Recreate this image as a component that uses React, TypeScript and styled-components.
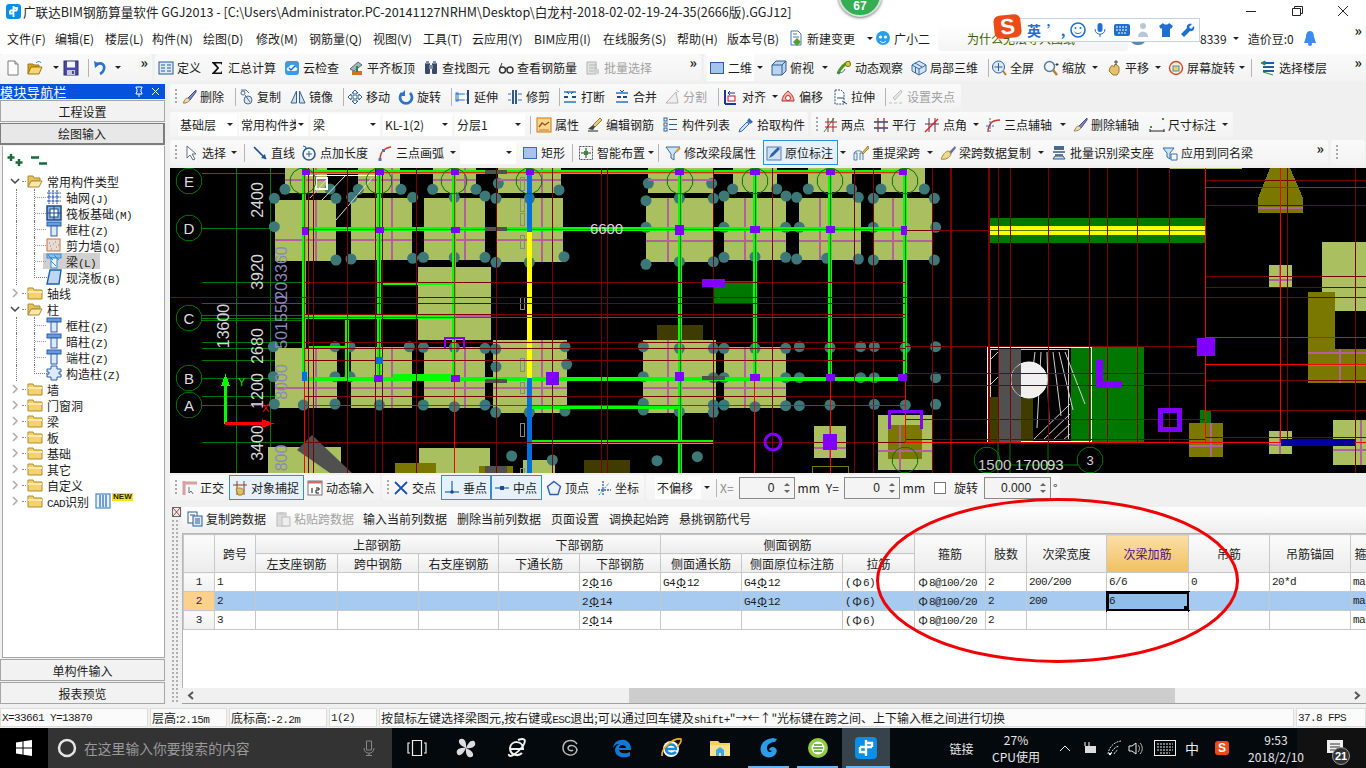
import React from "react";
import styled, { createGlobalStyle } from "styled-components";

const Global = createGlobalStyle`
  html, body { margin: 0; padding: 0; background: #f0f0f0; }
  * { box-sizing: border-box; }
  body { font-family: "Noto Sans CJK SC", "Liberation Sans", sans-serif; font-size: 12px; color: #1c1c1c; }
`;

const MONO = `"Liberation Mono", "Noto Sans CJK SC", monospace`;

/* ---------- icons ---------- */
const I: Record<string, React.ReactNode> = {
  new: <><path d="M3 1h7l3 3v11H3z" fill="#fff" stroke="#7a7a7a" /><path d="M10 1v3h3" fill="#ddd" stroke="#7a7a7a" /></>,
  open: <><path d="M1 4h5l1 1h5v2H4L1 14z" fill="#d9a520" stroke="#a07810" /><path d="M4 7h11l-3 7H1z" fill="#f6d66e" stroke="#a07810" /><path d="M9 3c2-2 4-2 5 0" stroke="#2a7fb0" fill="none" /></>,
  save: <><rect x="1" y="1" width="14" height="14" fill="#4a4aa8" stroke="#2c2c70" /><rect x="4" y="1.5" width="8" height="6" fill="#f4f4ff" /><rect x="4" y="10" width="8" height="5" fill="#c8c8d8" /><rect x="9" y="11" width="2" height="3" fill="#4a4aa8" /></>,
  undo: <><path d="M5 4c5-2 8 1 7 5-.5 2-2 4-4 5" fill="none" stroke="#2d74c8" strokeWidth="2.6" /><path d="M2 1l1 7 5-4z" fill="#2d74c8" /></>,
  define: <><rect x="1" y="2" width="14" height="12" fill="#dcebf8" stroke="#2a5a9a" /><path d="M3 5h4M3 8h4M3 11h4M9 5h4M9 8h4M9 11h4" stroke="#2a5a9a" /></>,
  sum: <path d="M3 2h10v3l-1.2-1.4H6.5L10.2 8l-4 4.4h5.8l1-2V14H3v-.8L8 8 3 2.8z" fill="#111" />,
  cloud: <><rect x="1" y="1" width="14" height="14" rx="3" fill="#3d9be6" /><path d="M5 11c-3 0-3-4 0-4 1-3 6-3 6 0 3 0 3 4 0 4z" fill="#e8f4ff" /><path d="M5 8l2 2 4-4" fill="none" stroke="#1f6fc0" strokeWidth="1.4" /></>,
  level: <><path d="M2 9l8-7 4 3-8 6z" fill="#9fb4c8" stroke="#5a6a7a" /><rect x="4" y="11" width="10" height="4" fill="#c8742c" /><path d="M9 6v6" stroke="#2c8a2c" strokeWidth="2" /></>,
  find: <><rect x="2" y="3" width="5" height="11" rx="1" fill="#3a4a66" /><rect x="9" y="3" width="5" height="11" rx="1" fill="#3a4a66" /><rect x="6" y="5" width="4" height="4" fill="#7e8ea8" /><rect x="3" y="1" width="3" height="3" fill="#7e8ea8" /><rect x="10" y="1" width="3" height="3" fill="#7e8ea8" /></>,
  glass: <><circle cx="4.5" cy="10" r="3" fill="none" stroke="#333" strokeWidth="1.4" /><circle cx="12" cy="10" r="3" fill="none" stroke="#333" strokeWidth="1.4" /><path d="M7 9c1-1 2-1 3 0M2 8l2-5" stroke="#333" fill="none" /></>,
  batch: <><rect x="2" y="2" width="9" height="12" fill="#e2e2e2" stroke="#b4b4b4" /><path d="M4 5h8M4 8h8M4 11h8" stroke="#b4b4b4" /><rect x="9" y="9" width="5" height="5" fill="#d0d0d0" /></>,
  twoD: <rect x="1.5" y="2.5" width="13" height="11" fill="#a4c4ee" stroke="#2c5ca8" />,
  top: <><path d="M1 5l4-4h10v10l-4 4H1z" fill="#b9d4ee" stroke="#2f5f8f" /><path d="M1 5h10v10M11 5l4-4" fill="none" stroke="#2f5f8f" /></>,
  orbit: <><path d="M2 14C4 8 9 3 14 2" stroke="#4a9a1c" strokeWidth="3" fill="none" /><circle cx="12" cy="4" r="2.6" fill="#d8c838" stroke="#7a7a1c" /><path d="M1 12c3 2 7 0 8-3" stroke="#3a6a9a" fill="none" /></>,
  part3d: <><path d="M8 1l7 4v6l-7 4-7-4V5z" fill="#d4e4f6" stroke="#3a6aa0" /><path d="M1 5l7 4 7-4M8 9v6M4 3l7 4M4.500 13V7" stroke="#3a6aa0" fill="none" /></>,
  fit: <><circle cx="7.500" cy="7" r="6" fill="#dceaf8" stroke="#2f5f9f" /><path d="M7.500 3v8M3.500 7h8" stroke="#2f5f9f" /><path d="M12 11l3 4" stroke="#b08030" strokeWidth="2" /></>,
  zoom: <><circle cx="6.500" cy="6.500" r="5" fill="#eef4fa" stroke="#5a7a9a" strokeWidth="1.5" /><path d="M10 10l4 5" stroke="#b08030" strokeWidth="2.4" /><path d="M14 3v3M12.500 4.500h3" stroke="#333" /></>,
  pan: <><path d="M4 8c1-3 3-3 4-1l1-3 2 1 2 2v5l-2 3H7L3 11z" fill="#e6c06c" stroke="#9a7a30" /><path d="M10 0v5M8 2h4" stroke="#444" /></>,
  rotate: <><circle cx="8" cy="8" r="6.500" fill="#e8f2e0" stroke="#d8482c" strokeWidth="1.4" /><rect x="5" y="6" width="6" height="5" fill="#f0d060" stroke="#4a8ac0" /></>,
  floor: <><path d="M3 3h11M3 7h11M3 11h11" stroke="#1f5fa0" strokeWidth="2" /><path d="M5 1L1 3l4 2zM3 12l10 3" stroke="#2a8a3a" fill="#2a8a3a" /></>,
  erase: <><path d="M15 1L7 9l2 2 6-8z" fill="#7a8ac8" stroke="#444a88" /><path d="M7 9c-3 0-3 2-5 5 3 0 6-1 7-3z" fill="#e8dcc0" stroke="#a08850" /><path d="M3 14h2" stroke="#d83" /></>,
  copy: <><path d="M3 1h5l3 3" fill="none" stroke="#4a6a8a" /><circle cx="10" cy="11" r="4" fill="#dde6ee" stroke="#4a6a8a" /><circle cx="5" cy="4" r="2" fill="none" stroke="#4a6a8a" /><path d="M7 6l5 7" stroke="#4a6a8a" /></>,
  mirror: <><path d="M6.500 2v12H1zM9.500 2v12H15z" fill="#cfe0f0" stroke="#38628c" /></>,
  move: <><path d="M8 1l3 3H9v3h3V5l3 3-3 3V9H9v3h2l-3 3-3-3h2V9H4v2L1 8l3-3v2h3V4H5z" fill="#fff" stroke="#2f5f8f" /></>,
  rot2: <><path d="M4 4a6 6 0 1 0 8 0" fill="none" stroke="#2d74c8" strokeWidth="2.800" /><path d="M7 1v6H1z" fill="#2d74c8" /></>,
  extend: <><path d="M13 1v14" stroke="#204a80" strokeWidth="2" /><path d="M1 5h8M1 11h8" stroke="#2d74c8" /><path d="M9 5h3M9 11h3" stroke="#888" strokeDasharray="1 1" /><rect x="1" y="4" width="2" height="8" fill="none" stroke="#2d74c8" /></>,
  trim: <><path d="M6 1v14M9 1v14" stroke="#204a80" strokeWidth="1.800" /><path d="M1 5h3M1 11h3M11 5h4M11 11h4" stroke="#2d74c8" /></>,
  brk: <><path d="M2 3h12M2 13h12" stroke="#2d74c8" strokeWidth="1.500" /><path d="M2 8h4M10 8h4" stroke="#204a80" strokeWidth="2" /><path d="M5 3l2 2M11 3l-2 2" stroke="#204a80" /></>,
  merge: <><path d="M2 4h12M2 13h12" stroke="#2d74c8" strokeWidth="1.500" /><path d="M3 8h4M9 8h4" stroke="#204a80" strokeWidth="2" /><path d="M6 1l2 2 2-2" stroke="#204a80" fill="none" /></>,
  split: <><path d="M2 14L12 3l2 11z" fill="#eee" stroke="#b4b4b4" /><path d="M12 1l3 2" stroke="#b4b4b4" /></>,
  align: <><path d="M2 1v14M2 15h11" stroke="#1a3a9a" strokeWidth="2" /><rect x="5" y="7" width="7" height="5" fill="#f8f8f8" stroke="#b02030" /><path d="M5 4h7M7 2L5 4l2 2" stroke="#1a3a9a" fill="none" /></>,
  offset: <><path d="M8 2c4 3 6 7 6 10H2c0-3 2-7 6-10z" fill="#f6b0a8" stroke="#b03030" /><circle cx="8" cy="9" r="2.500" fill="#fff" stroke="#b03030" /></>,
  stretch: <><path d="M3 1h6l3 3v11H3z" fill="#fff" stroke="#2f4f7f" strokeDasharray="2 1" /><path d="M5 9h7" stroke="#204a80" /><path d="M10 12l5 3" stroke="#204a80" /></>,
  grips: <><path d="M13 1L5 9l2 2 7-8z" fill="#e6e6e6" stroke="#c0c0c0" /><path d="M1 14h13" stroke="#c0c0c0" strokeDasharray="3 2" /></>,
  attr: <><rect x="1" y="1" width="14" height="14" fill="#f6d890" stroke="#c87818" /><path d="M3 10l3-4 3 2 4-3" stroke="#a05010" fill="none" strokeWidth="1.400" /><path d="M3 13h10" stroke="#c87818" /></>,
  bar: <><path d="M13 1L6 8l2 2 7-7z" fill="#e4d08c" stroke="#9a7a30" /><path d="M1 12l5-4 2 2-2 3z" fill="#444" /><path d="M1 14h10" stroke="#222" /></>,
  list: <><rect x="1" y="1" width="3" height="3" fill="#fff" stroke="#2f5f8f" /><rect x="1" y="6" width="3" height="3" fill="#fff" stroke="#2f5f8f" /><rect x="1" y="11" width="3" height="3" fill="#fff" stroke="#2f5f8f" /><path d="M6 2.500h8M6 7.500h8M6 12.500h8" stroke="#2f5f8f" /></>,
  pick: <><path d="M11 1l4 4-3 2-3-3z" fill="#2f6fb0" /><path d="M9 5l2 2-7 7-3 1 1-3z" fill="#cfe4f8" stroke="#2f6fb0" /></>,
  two: <><path d="M2 15L12 1" stroke="#30903c" /><path d="M3 5h12M3 10h12" stroke="#b02020" /><path d="M6 1v14M11 1v14" stroke="#803030" /></>,
  par: <><path d="M1 5h14M1 11h14" stroke="#204a80" strokeWidth="1.300" /><path d="M5 1v14M11 1v14" stroke="#804040" strokeWidth="1.300" /></>,
  ang: <><path d="M5 1v14M11 1v14M1 7h14" stroke="#5a3050" /><path d="M1 15L14 2" stroke="#e02020" strokeWidth="1.500" /></>,
  arc3: <><path d="M3 15C3 6 8 3 15 3" fill="none" stroke="#d03030" strokeWidth="1.400" /><path d="M1 9h8M5 1v14" stroke="#3a6a9a" strokeDasharray="2 1" /></>,
  del: <><path d="M15 1L7 9l2 2 6-8z" fill="#7a8ac8" stroke="#444a88" /><path d="M7 9c-3 0-3 2-5 5 3 0 6-1 7-3z" fill="#e8dcc0" stroke="#a08850" /></>,
  dim: <><rect x="1" y="9" width="2" height="2" fill="#2a9a3a" /><rect x="13" y="1" width="2" height="2" fill="#2a9a3a" /><path d="M1 12v3M15 12v3M1 14h14" stroke="#222" /></>,
  sel: <path d="M4 1v12l3-3 3 5 2-1-3-5h4z" fill="#fff" stroke="#607080" />,
  line: <><path d="M2 2l12 12" stroke="#1f4f8f" strokeWidth="1.600" /><path d="M14 14l-5-1 4-4z" fill="#1f4f8f" /></>,
  addlen: <><circle cx="8" cy="9" r="6" fill="none" stroke="#2f5f8f" strokeWidth="1.600" /><path d="M8 6v6M5 9h6" stroke="#2f5f8f" /><path d="M2 1l3 1-1 3" stroke="#2f5f8f" fill="none" /></>,
  arc: <><path d="M3 15C3 7 7 3 14 2" fill="none" stroke="#d04030" strokeWidth="1.400" /><rect x="1.500" y="13" width="3" height="3" fill="#4a7ab0" /><rect x="5" y="4" width="3" height="3" fill="#4a7ab0" /></>,
  rect: <rect x="1.500" y="2.500" width="13" height="11" fill="#a4c4ee" stroke="#3a6ab0" />,
  smart: <><rect x="1.500" y="1.500" width="13" height="13" fill="#f4f4f4" stroke="#555" strokeDasharray="2 1" /><path d="M8 3v10M3 8h10" stroke="#333" /><rect x="6" y="6" width="4" height="4" fill="#3a8a3a" /></>,
  modseg: <><path d="M1 2h14L9 9v6l-3-2V9z" fill="#d0e4f8" stroke="#3a6a9a" /><path d="M11 7l4-4" stroke="#d8a020" strokeWidth="2" /></>,
  mark: <><rect x="1" y="2" width="14" height="13" fill="#cfe0f2" stroke="#5a80ac" /><path d="M3 13l2-4 7-7 2 2-7 7z" fill="#2f5fa8" /></>,
  reext: <><path d="M1 15V8h3v7zM7 15V8h3v7M1 8c2-3 7-3 9 0" fill="#e8eef6" stroke="#5080b0" /><path d="M15 1l-6 7 1 1 6-6z" fill="#e4c060" stroke="#a08030" /></>,
  spancopy: <><path d="M15 1l-6 6 2 2 5-6z" fill="#6a70a0" /><path d="M9 6C5 6 3 10 1 14c4 1 9-1 10-5z" fill="#eed890" stroke="#a08830" /></>,
  batchid: <><rect x="3" y="1" width="10" height="4" fill="#4a6a8a" /><path d="M2 7h12M4 10h8" stroke="#3a5a7a" strokeWidth="1.500" /><path d="M2 14l2-3 8 0 2 3z" fill="#c8d8e8" stroke="#3a5a7a" /></>,
  apply: <><path d="M1 3h11l-4 5v6l-3-2V8z" fill="#cfe2f6" stroke="#2f6fb0" /><path d="M9 9h6v6H9z" fill="#fff" stroke="#2f6fb0" /></>,
  ortho: <><path d="M3 1v14M3 3h13" stroke="#d8a0a0" strokeWidth="3" /><path d="M8 7v6l2-2 2 3" stroke="#607080" fill="#fff" /></>,
  snap: <><path d="M5 1v14M12 1v14" stroke="#884020" /><path d="M1 5h14" stroke="#884020" /><path d="M4 9c3-2 7-1 8 2l-2 4H6z" fill="#e0c060" stroke="#a08030" /></>,
  dyn: <><rect x="1" y="1" width="14" height="14" fill="#fff" stroke="#777" /><rect x="1" y="1" width="14" height="2.500" fill="#c87070" /><path d="M5 8v5M9 8h3v2H9v3h3" stroke="#111" fill="none" /></>,
  cross: <path d="M2 2l12 12M14 2L2 14" stroke="#2050b0" strokeWidth="1.800" />,
  perp: <><path d="M8 1v11" stroke="#2f6fb0" strokeWidth="1.300" /><path d="M1 12h14" stroke="#2f6fb0" strokeWidth="1.300" /><circle cx="8" cy="12" r="1.800" fill="#204a90" /></>,
  mid: <><path d="M1 8h14" stroke="#2f6fb0" strokeWidth="1.300" /><rect x="6" y="6" width="4" height="4" fill="#204a90" /></>,
  vertex: <path d="M8 1.500l6.500 5-2.500 8H4l-2.500-8z" fill="#eaf2fc" stroke="#2f5fb0" strokeWidth="1.400" />,
  coord: <><path d="M7 1v14M2 10h13" stroke="#2f5fb0" strokeDasharray="2 1" strokeWidth="1.300" /><path d="M3 15L13 3" stroke="#2a9aa0" strokeDasharray="2 1" /></>,
  dcopy: <><rect x="1" y="1" width="9" height="11" fill="#fff" stroke="#2f5f8f" /><rect x="6" y="5" width="9" height="10" fill="#dceafa" stroke="#2f5f8f" /><path d="M8 8h5M8 10h5M8 12h5M3 4h5" stroke="#2f5f8f" /></>,
  paste: <><rect x="2" y="2" width="9" height="13" fill="#ddd" stroke="#bbb" /><rect x="7" y="6" width="8" height="9" fill="#eee" stroke="#bbb" /><rect x="4" y="1" width="5" height="3" fill="#ccc" /></>,
  chg: <><path d="M3 1h7l3 3v11H3z" fill="#fff" stroke="#3a7ac0" /><path d="M5 4h4M5 7h6" stroke="#3a7ac0" /><path d="M9 8l4 4-4 4-4-4z" fill="#58a028" /></>,
  xiao: <><circle cx="8" cy="8" r="7" fill="#28a0e8" /><circle cx="5.500" cy="7" r="1.600" fill="#fff" /><circle cx="10.500" cy="7" r="1.600" fill="#fff" /><path d="M5 11c2 2 4 2 6 0" stroke="#fff" fill="none" /></>,
  bell: <><path d="M8 1c3 0 4 3 4 6l2 6H2l2-6c0-3 1-6 4-6z" fill="#3a8af0" /><circle cx="8" cy="14" r="2" fill="#3a8af0" /></>,
  folder: <><path d="M1 3h5l1 2h8v9H1z" fill="#f5d36c" stroke="#a98a30" /><path d="M1 6h14v2H1z" fill="#fbe9a8" /></>,
  folderOpen: <><path d="M1 3h5l1 2h6v3H5l-4 6z" fill="#e8c358" stroke="#a98a30" /><path d="M4 8h11l-3 6H1z" fill="#fbe9a8" stroke="#a98a30" /></>,
  grid: <><path d="M3 1v14M7 1v14M11 1v14M1 4h14M1 8h14M1 12h14" stroke="#2f5fb0" strokeWidth="1.200" strokeDasharray="2 .5" /></>,
  raft: <><rect x="1" y="1" width="14" height="14" fill="#8ab0dc" stroke="#1a4a8a" strokeWidth="1.500" /><rect x="4" y="4" width="8" height="8" fill="#fff" stroke="#1a4a8a" /><path d="M8 1v14M1 8h14" stroke="#1a4a8a" /></>,
  col: <><rect x="1" y="1" width="14" height="4" fill="#6a9ade" stroke="#2c5ca8" /><rect x="5" y="5" width="6" height="10" fill="#dceafa" stroke="#2c5ca8" /></>,
  wall: <><rect x="1" y="2" width="13" height="12" fill="#e8dcd0" stroke="#c87040" /><path d="M4 9h1M7 7h1M10 10h1M5 12h1M9 5h1M3 6h1M12 8h1" stroke="#888" /></>,
  beam: <><rect x="1" y="1" width="14" height="4" fill="#8ac0ec" stroke="#3a8ad0" /><rect x="5" y="5" width="6" height="10" fill="#eaf4fc" stroke="#3a8ad0" /><path d="M2 2l5 5M8 2l5 5M5 8l5 5" stroke="#3a8ad0" /></>,
  slab: <path d="M4 1h11l-2 14H1z" fill="#bcd6f4" stroke="#1f5fb0" strokeWidth="1.400" />,
  gz: <><path d="M5 1h6v3h4v3h-2v2h2v3h-4v3H5v-3H1V9h2V7H1V4h4z" fill="#dceafa" stroke="#2c5ca8" /></>,
  cad: <><rect x="1" y="1" width="14" height="14" fill="#e8f2fc" stroke="#4a84c4" strokeWidth="1.200" /><path d="M5 2v12M11 2v12M8 2v12" stroke="#4a84c4" strokeWidth="1.500" /></>,
};

const Svg16 = styled.svg`
  width: 16px;
  height: 16px;
  flex: none;
  display: block;
`;
const Icon = ({ n }: { n: string }) => <Svg16 viewBox="0 0 16 16">{I[n]}</Svg16>;

/* ---------- page frame ---------- */
const Page = styled.div`
  position: relative;
  width: 1366px;
  height: 768px;
  overflow: hidden;
  display: flex;
  flex-direction: column;
  background: #f0f0f0;
`;

const TitleBar = styled.div`
  height: 22px;
  flex: none;
  background: #fff;
  display: flex;
  align-items: center;
  padding-left: 6px;
  font-size: 12.6px;
  color: #222;
  white-space: nowrap;
`;
const AppLogo = styled.svg`
  width: 15px;
  height: 15px;
  flex: none;
  margin-right: 2px;
`;
const WinBtn = styled.svg`
  width: 46px;
  height: 22px;
  flex: none;
`;
const WinBtns = styled.div`
  margin-left: auto;
  display: flex;
`;

const MenuBar = styled.div`
  height: 32px;
  flex: none;
  background: #fff;
  display: flex;
  align-items: center;
  padding-left: 7px;
  white-space: nowrap;
`;
const MenuItem = styled.div<{ $w: number }>`
  width: ${(p) => p.$w}px;
  flex: none;
`;
const MenuTool = styled.div<{ $w: number }>`
  display: flex;
  align-items: center;
  gap: 3px;
  width: ${(p) => p.$w}px;
  flex: none;
`;
const Notice = styled.div`
  width: 190px;
  height: 26px;
  flex: none;
  background: linear-gradient(#ffffff, #f4f4f4);
  border-radius: 3px;
  padding-left: 29px;
  color: #3a6000;
  line-height: 28px;
  overflow: hidden;
  margin-left: 1px;
`;
const UserText = styled.div<{ $ml: number }>`
  margin-left: ${(p) => p.$ml}px;
`;
const Avatar = styled.div`
  width: 16px;
  height: 14px;
  border-radius: 8px;
  background: #5a8ab0;
  margin-left: 2px;
`;

/* ---------- toolbars ---------- */
const ToolRow = styled.div<{ $h: number }>`
  height: ${(p) => p.$h}px;
  flex: none;
  display: flex;
  align-items: flex-start;
  gap: 3px;
`;
const Toolbar = styled.div<{ $w: number; $h?: number; $mt?: number; $ml?: number }>`
  width: ${(p) => p.$w}px;
  height: ${(p) => p.$h ?? 25}px;
  margin-top: ${(p) => p.$mt ?? 0}px;
  margin-left: ${(p) => p.$ml ?? 0}px;
  flex: none;
  display: flex;
  align-items: center;
  border-radius: 3px;
  background: linear-gradient(#fafafa, #f3f3f3);
  white-space: nowrap;
`;
const Grip = styled.div<{ $w: number }>`
  width: ${(p) => p.$w}px;
  height: 16px;
  flex: none;
  margin-left: 0;
  padding-left: 5px;
  &::before {
    content: "";
    display: block;
    width: 2px;
    height: 16px;
    background: repeating-linear-gradient(to bottom, #a8a8a8 0 2px, transparent 2px 4px);
  }
`;
const ToolBtn = styled.div<{ $w: number; $off?: boolean; $on?: boolean; $white?: boolean }>`
  width: ${(p) => p.$w}px;
  height: ${(p) => (p.$on || p.$white ? "100%" : "auto")};
  flex: none;
  display: flex;
  align-items: center;
  gap: 3px;
  padding-left: ${(p) => (p.$on ? 2 : p.$white ? 2 : 0)}px;
  color: ${(p) => (p.$off ? "#a2a2a2" : "#1c1c1c")};
  background: ${(p) => (p.$on ? "#e6f1fb" : p.$white ? "#fff" : "transparent")};
  border: ${(p) => (p.$on ? "1px solid #2f8ee0" : "none")};
  overflow: hidden;
`;
const Sep = styled.div<{ $w: number }>`
  width: ${(p) => p.$w}px;
  height: 18px;
  flex: none;
  display: flex;
  justify-content: center;
  &::before {
    content: "";
    width: 1px;
    height: 18px;
    background: #b4b4b4;
  }
`;
const Space = styled.div<{ $w: number }>`
  width: ${(p) => p.$w}px;
  flex: none;
`;
const ArrowBox = styled.div<{ $w: number }>`
  width: ${(p) => p.$w}px;
  flex: none;
  display: flex;
  justify-content: center;
  &::before {
    content: "";
    border-left: 3px solid transparent;
    border-right: 3px solid transparent;
    border-top: 3px solid #222;
  }
`;
const More = styled.div`
  margin-left: auto;
  padding-right: 4px;
  font-size: 14px;
  font-weight: 700;
  line-height: 12px;
  align-self: flex-start;
  padding-top: 2px;
`;
const Combo = styled.div<{ $w: number; $ml?: number; $plain?: boolean }>`
  width: ${(p) => p.$w}px;
  height: 22px;
  margin-left: ${(p) => p.$ml ?? 0}px;
  flex: none;
  background: #fff;
  display: flex;
  align-items: center;
  padding-left: 2px;
  overflow: hidden;
  justify-content: space-between;
  &::after {
    content: "";
    display: ${(p) => (p.$plain ? "none" : "block")};
    flex: none;
    margin: 0 4px 0 2px;
    border-left: 3px solid transparent;
    border-right: 3px solid transparent;
    border-top: 3px solid #222;
  }
`;
const ComboText = styled.span`
  overflow: hidden;
  white-space: nowrap;
  flex: 1;
`;

type Item =
  | { k: "t"; i: string; l: string; w: number; off?: boolean; on?: boolean; white?: boolean }
  | { k: "s"; w: number }
  | { k: "g"; w: number }
  | { k: "a"; w: number }
  | { k: "p"; w: number };
const t = (i: string, l: string, w: number, o: { off?: boolean; on?: boolean; white?: boolean } = {}): Item => ({ k: "t", i, l, w, ...o });
const s = (w: number): Item => ({ k: "s", w });
const g = (w: number): Item => ({ k: "g", w });
const a = (w: number): Item => ({ k: "a", w });
const p = (w: number): Item => ({ k: "p", w });

const Items = ({ list }: { list: Item[] }) => (
  <>
    {list.map((it, n) => {
      if (it.k === "t")
        return (
          <ToolBtn key={n} $w={it.w} $off={it.off} $on={it.on} $white={it.white}>
            <Icon n={it.i} />
            {it.l && <span>{it.l}</span>}
          </ToolBtn>
        );
      if (it.k === "s") return <Sep key={n} $w={it.w} />;
      if (it.k === "g") return <Space key={n} $w={it.w} />;
      if (it.k === "a") return <ArrowBox key={n} $w={it.w} />;
      return <Grip key={n} $w={it.w} />;
    })}
  </>
);

const R1A: Item[] = [g(5), t("new", "", 22), t("open", "", 22), a(14), t("save", "", 22), s(7), t("undo", "", 23), a(5)];
const R1B: Item[] = [g(3), t("define", "定义", 51), t("sum", "汇总计算", 75), t("cloud", "云检查", 64), t("level", "平齐板顶", 75), t("find", "查找图元", 75), t("glass", "查看钢筋量", 87), t("batch", "批量选择", 80, { off: true })];
const R1C: Item[] = [g(3), t("twoD", "二维", 47, { white: true }), a(12), g(5), t("top", "俯视", 47), a(14), g(4), t("orbit", "动态观察", 75), t("part3d", "局部三维", 74), s(6), t("fit", "全屏", 52), t("zoom", "缩放", 47), a(10), g(6), t("pan", "平移", 46), a(12), g(4), t("rotate", "屏幕旋转", 70), a(8), s(10), g(4), t("floor", "选择楼层", 70)];
const R2: Item[] = [p(11), t("erase", "删除", 51), s(6), t("copy", "复制", 52), t("mirror", "镜像", 50), s(7), t("move", "移动", 51), t("rot2", "旋转", 49), s(8), t("extend", "延伸", 52), t("trim", "修剪", 49), s(6), t("brk", "打断", 52), t("merge", "合并", 50), t("split", "分割", 50, { off: true }), s(9), t("align", "对齐", 47), a(10), t("offset", "偏移", 52), t("stretch", "拉伸", 50), s(6), t("grips", "设置夹点", 73, { off: true })];
const R3A: Item[] = [s(11), t("attr", "属性", 51), t("bar", "编辑钢筋", 76), t("list", "构件列表", 75), t("pick", "拾取构件", 70)];
const R3B: Item[] = [p(11), t("two", "两点", 51), t("par", "平行", 51), t("ang", "点角", 47), a(10), g(4), t("arc3", "三点辅轴", 73), a(10), g(4), t("del", "删除辅轴", 77), t("dim", "尺寸标注", 71), a(10)];
const R4A: Item[] = [p(13), t("sel", "选择", 44), a(14), s(6), g(5), t("line", "直线", 49), t("addlen", "点加长度", 76), t("arc", "三点画弧", 70), a(12)];
const R4B: Item[] = [g(6), t("rect", "矩形", 47), s(6), g(3), t("smart", "智能布置", 70), a(6), s(8), g(3), t("modseg", "修改梁段属性", 98), t("mark", "原位标注", 75, { on: true }), a(10), g(5), t("reext", "重提梁跨", 72), a(10), g(5), t("spancopy", "梁跨数据复制", 96), a(10), g(5), t("batchid", "批量识别梁支座", 111), t("apply", "应用到同名梁", 95)];
const S1: Item[] = [p(11), t("ortho", "正交", 48), t("snap", "对象捕捉", 75, { on: true }), g(3), t("dyn", "动态输入", 70)];
const S2: Item[] = [p(11), t("cross", "交点", 48), t("perp", "垂点", 50, { on: true }), t("mid", "中点", 51, { on: true }), g(4), t("vertex", "顶点", 50), t("coord", "坐标", 48)];

/* ---------- body ---------- */
const Body = styled.div`
  flex: 1;
  min-height: 0;
  display: flex;
`;
const Nav = styled.div`
  width: 165px;
  flex: none;
  display: flex;
  flex-direction: column;
  padding-bottom: 3px;
`;
const NavHead = styled.div`
  height: 15px;
  flex: none;
  background: #0553dd;
  color: #fff;
  display: flex;
  align-items: center;
  font-size: 13px;
  margin-bottom: 1px;
  letter-spacing: 0.4px;
`;
const NavHeadIcons = styled.svg`
  width: 34px;
  height: 15px;
  margin-left: auto;
`;
const NavBtn = styled.div<{ $down?: boolean }>`
  height: 22px;
  flex: none;
  display: flex;
  align-items: center;
  justify-content: center;
  background: ${(q) => (q.$down ? "#e8e8e8" : "#f2f2f2")};
  border: 1px solid ${(q) => (q.$down ? "#7e7e7e" : "#a6a6a6")};
  border-width: ${(q) => (q.$down ? "1px 2px 2px 1px" : "1px")};
  margin-bottom: 1px;
`;
const TreeWrap = styled.div`
  flex: 1;
  min-height: 0;
  background: #fff;
  border: 1px solid #a6a6a6;
  border-top: none;
  margin: 0 0 1px 2px;
`;
const TreeTools = styled.div`
  height: 27px;
  display: flex;
  align-items: center;
  gap: 6px;
  padding-left: 4px;
`;
const PlusMinus = styled.svg`
  width: 18px;
  height: 14px;
`;
const TreeRow = styled.div<{ $child?: boolean; $last?: boolean }>`
  position: relative;
  height: 16px;
  display: flex;
  align-items: center;
  padding-left: ${(q) => (q.$child ? 40 : 6)}px;
  white-space: nowrap;
  &::before {
    content: "";
    display: ${(q) => (q.$child ? "block" : "none")};
    position: absolute;
    left: 31px;
    top: 0;
    width: 12px;
    height: ${(q) => (q.$last ? 8 : 16)}px;
    border-left: 1px dotted #777;
    border-bottom: ${(q) => (q.$last ? "1px dotted #777" : "none")};
    background: ${(q) =>
      q.$last ? "none" : "linear-gradient(to right,#999 0 50%,transparent 50%) 0 8px/2px 1px repeat-x"};
  }
  &::after {
    content: "";
    display: ${(q) => (q.$child ? "block" : "none")};
    position: absolute;
    left: 13px;
    top: 0;
    height: 16px;
    border-left: 1px dotted #777;
  }
`;
const Chevron = styled.svg`
  width: 12px;
  height: 12px;
  flex: none;
`;
const DotLink = styled.div`
  width: 4px;
  flex: none;
  margin: 0 1px;
  border-top: 1px dotted #888;
`;
const TreeLabel = styled.div`
  margin-left: 4px;
  display: flex;
  align-items: center;
  height: 16px;
`;
const SelBox = styled.div`
  display: flex;
  align-items: center;
  width: 57px;
  background: #d0d0d0;
  gap: 4px;
  height: 16px;
  padding-left: 3px;
`;
const Latin = styled.span`
  font-family: ${MONO};
  font-size: 11px;
  letter-spacing: -0.6px;
`;
const NewTag = styled.span`
  font-family: "Liberation Sans", sans-serif;
  font-size: 8px;
  font-weight: 700;
  color: #222;
  background: #ffe600;
  line-height: 8px;
  padding: 0 1px;
  margin: -8px 0 0 1px;
`;

const Main = styled.div`
  flex: 1;
  min-width: 0;
  margin-left: 5px;
  display: flex;
  flex-direction: column;
`;
const Canvas = styled.svg`
  display: block;
  width: 1196px;
  height: 305px;
  flex: none;
  background: #000;
  shape-rendering: crispEdges;
`;

const BottomPanel = styled.div`
  flex: 1;
  min-height: 0;
  display: flex;
`;
const PanelGrip = styled.div`
  width: 12px;
  flex: none;
  position: relative;
  padding-top: 13px;
  &::after {
    content: "";
    display: block;
    margin-left: 2px;
    width: 6px;
    height: 184px;
    background-image: repeating-linear-gradient(to bottom, #b0b0b0 0 2px, transparent 2px 4px),
      repeating-linear-gradient(to bottom, #b0b0b0 0 2px, transparent 2px 4px);
    background-size: 2px 100%, 2px 100%;
    background-position: 0 0, 4px 0;
    background-repeat: no-repeat;
  }
`;
const CloseMark = styled.svg`
  position: absolute;
  left: 2px;
  top: 0;
  width: 9px;
  height: 10px;
`;
const PanelMain = styled.div`
  flex: 1;
  min-width: 0;
  display: flex;
  flex-direction: column;
  padding-bottom: 4px;
`;
const TableTools = styled.div`
  height: 23px;
  flex: none;
  margin-bottom: 3px;
  background: linear-gradient(#ffffff, #f0f0f0);
  display: flex;
  align-items: center;
  padding-left: 5px;
  white-space: nowrap;
`;
const TableArea = styled.div`
  flex: 1;
  min-height: 0;
  background: #fff;
  overflow: hidden;
  border-top: 1px solid #b4b4b4;
  border-left: 1px solid #b4b4b4;
`;
const Table = styled.table`
  border-collapse: collapse;
  table-layout: fixed;
  width: 1183px;
  margin: 0;
`;
const Th = styled.th<{ $hot?: boolean }>`
  height: 19px;
  padding: 0;
  font-weight: 400;
  font-size: 12px;
  overflow: hidden;
  white-space: nowrap;
  color: ${(q) => (q.$hot ? "#4b0a86" : "#1c1c1c")};
  border: 1px solid #c8c8c8;
  background: ${(q) =>
    q.$hot ? "linear-gradient(#fbdfa8,#f0c060)" : "linear-gradient(#fbfbfb,#ececec)"};
`;
const Td = styled.td<{ $sel?: boolean; $active?: boolean; $thick?: boolean }>`
  height: 19px;
  padding: 0 0 0 2px;
  border: 1px solid #c8c8c8;
  font-family: ${MONO};
  font-size: 11px;
  letter-spacing: -0.6px;
  white-space: nowrap;
  overflow: hidden;
  position: relative;
  background: ${(q) => (q.$active ? "#8fbdec" : q.$sel ? "#a6caf0" : "#fff")};
  border-left: ${(q) => (q.$thick ? "1.500px solid #000" : "1px solid #c8c8c8")};
  outline: ${(q) => (q.$active ? "3px solid #000" : "none")};
  outline-offset: -2px;
`;
const RowHead = styled.td<{ $sel?: boolean }>`
  height: 19px;
  padding: 0;
  text-align: center;
  border: 1px solid #c8c8c8;
  font-family: ${MONO};
  font-size: 11px;
  color: ${(q) => (q.$sel ? "#4b0a86" : "#222")};
  background: ${(q) => (q.$sel ? "#fcd28a" : "linear-gradient(#fbfbfb,#f0f0f0)")};
`;
const Handle = styled.span`
  position: absolute;
  right: -1px;
  bottom: -1px;
  width: 5px;
  height: 5px;
  background: #000;
`;
const Rebar = styled.span`
  font-family: "Noto Sans CJK SC", sans-serif;
  font-size: 12px;
  letter-spacing: 0;
  display: inline-block;
  width: 12px;
  text-align: center;
  line-height: 12px;
  vertical-align: -1px;
`;
const RebarIII = styled(Rebar)`
  text-decoration: underline;
  text-underline-offset: 0;
`;

const HBar = styled.div`
  height: 16px;
  flex: none;
  background: #f0f0f0;
  display: flex;
  align-items: center;
  border-bottom: 1px solid #a0a0a0;
`;
const HArrow = styled.svg`
  width: 17px;
  height: 15px;
  flex: none;
`;
const HTrackGap = styled.div<{ $w: number }>`
  width: ${(q) => q.$w}px;
  flex: none;
`;
const HThumb = styled.div`
  width: 546px;
  height: 15px;
  flex: none;
  background: #cdcdcd;
`;

const StatusBar = styled.div`
  height: 20px;
  flex: none;
  display: flex;
  gap: 2px;
  background: #f0f0f0;
  padding-bottom: 1px;
`;
const StatusCell = styled.div<{ $w: number }>`
  width: ${(q) => q.$w}px;
  flex: none;
  background: #fbfbfb;
  border: 1px solid #dcdcdc;
  display: flex;
  align-items: center;
  padding-left: 1px;
  white-space: nowrap;
  overflow: hidden;
`;

/* ---------- spin / snap row ---------- */
const SnapText = styled.span<{ $ml?: number; $off?: boolean }>`
  margin-left: ${(q) => q.$ml ?? 0}px;
  color: ${(q) => (q.$off ? "#8a8a8a" : "#1c1c1c")};
  flex: none;
`;
const Spin = styled.div<{ $w: number; $ml: number }>`
  width: ${(q) => q.$w}px;
  margin-left: ${(q) => q.$ml}px;
  height: 22px;
  flex: none;
  background: #f4f4f4;
  border: 1px solid #8a8a8a;
  display: flex;
  align-items: center;
  justify-content: flex-end;
  font-family: "Liberation Sans", sans-serif;
  font-size: 12px;
`;
const SpinArrows = styled.div`
  width: 14px;
  height: 100%;
  margin-left: 5px;
  display: flex;
  flex-direction: column;
  justify-content: center;
  align-items: center;
  gap: 4px;
`;
const TriUp = styled.i`
  display: block;
  border-left: 3px solid transparent;
  border-right: 3px solid transparent;
  border-bottom: 3px solid #666;
`;
const TriDown = styled.i`
  display: block;
  border-left: 3px solid transparent;
  border-right: 3px solid transparent;
  border-top: 3px solid #666;
`;
const Check = styled.div`
  width: 12px;
  height: 12px;
  margin-left: 9px;
  background: #fff;
  border: 1px solid #777;
  flex: none;
`;

/* ---------- taskbar ---------- */
const Taskbar = styled.div`
  height: 40px;
  flex: none;
  display: flex;
  align-items: stretch;
  background: linear-gradient(to right, #03090d 0, #03090d 1297px, #111 1297px);
  color: #e8e8e8;
`;
const StartBtn = styled.div`
  width: 48px;
  flex: none;
  background: #000;
  display: flex;
  align-items: center;
  justify-content: center;
`;
const SearchBox = styled.div`
  width: 344px;
  flex: none;
  background: #333;
  display: flex;
  align-items: center;
  padding-left: 9px;
  color: #9a9a9a;
  font-size: 13.800px;
`;
const TaskCell = styled.div<{ $w: number; $bar?: boolean; $active?: boolean }>`
  width: ${(q) => q.$w}px;
  flex: none;
  position: relative;
  display: flex;
  align-items: center;
  justify-content: center;
  background: ${(q) => (q.$active ? "#37434a" : "transparent")};
  &::after {
    content: "";
    display: ${(q) => (q.$bar ? "block" : "none")};
    position: absolute;
    left: 4px;
    right: ${(q) => (q.$active ? 0 : 4)}px;
    bottom: 0;
    height: 2px;
    background: #6cb4f0;
  }
`;
const TaskSvg = styled.svg<{ $s?: number }>`
  width: ${(q) => q.$s ?? 24}px;
  height: ${(q) => q.$s ?? 24}px;
  display: block;
  flex: none;
`;
const TrayItem = styled.div<{ $ml: number; $w: number }>`
  margin-left: ${(q) => q.$ml}px;
  width: ${(q) => q.$w}px;
  flex: none;
  display: flex;
  align-items: center;
  justify-content: center;
  white-space: nowrap;
  position: relative;
`;
const TrayChar = styled.span`
  font-size: 14px;
`;
const CpuBox = styled.div`
  display: flex;
  flex-direction: column;
  align-items: center;
  justify-content: center;
  line-height: 17px;
  font-size: 12px;
`;
const NotifyBadge = styled.div`
  position: absolute;
  left: 7px;
  top: 19px;
  width: 18px;
  height: 18px;
  border-radius: 50%;
  background: #333;
  border: 1px solid #999;
  color: #fff;
  font-family: "Liberation Sans", sans-serif;
  font-size: 11px;
  font-weight: 700;
  display: flex;
  align-items: center;
  justify-content: center;
`;

/* ---------- overlays ---------- */
const Badge = styled.div`
  position: absolute;
  left: 838px;
  top: -27px;
  width: 44px;
  height: 44px;
  border-radius: 50%;
  background: #36ad53;
  border: 2px solid #d8e4da;
  box-shadow: 0 1px 3px #777;
  color: #fff;
  font-family: "Liberation Sans", sans-serif;
  font-weight: 700;
  font-size: 12px;
  display: flex;
  align-items: flex-end;
  justify-content: center;
  padding-bottom: 2px;
`;
const SogouBar = styled.div`
  position: absolute;
  left: 1009px;
  top: 18px;
  width: 191px;
  height: 24px;
  background: #fff;
  border: 1px solid #c4d4e4;
  display: flex;
  align-items: center;
  padding-left: 13px;
`;
const SogouCell = styled.div`
  width: 22px;
  flex: none;
  display: flex;
  align-items: center;
  justify-content: center;
`;
const SogouLogo = styled.div`
  position: absolute;
  left: 994px;
  top: 15px;
  width: 27px;
  height: 23px;
  background: #ee4a17;
  border-radius: 6px;
  transform: rotate(-6deg);
  color: #fff;
  font-family: "Liberation Sans", sans-serif;
  font-weight: 700;
  font-size: 22px;
  line-height: 23px;
  text-align: center;
`;
const SogouWord = styled.span`
  color: #1f6fd0;
  font-weight: 700;
  font-size: 14px;
`;
const TrayS = styled.div`
  width: 14px;
  height: 14px;
  background: #ee4a17;
  border-radius: 3px;
  color: #fff;
  font-family: "Liberation Sans", sans-serif;
  font-weight: 700;
  font-size: 12px;
  line-height: 14px;
  text-align: center;
`;
const RedEllipse = styled.svg`
  position: absolute;
  left: 875px;
  top: 497px;
  width: 365px;
  height: 167px;
  pointer-events: none;
`;

/* ---------- canvas data ---------- */
const z4 = (x: number, y: number): [number, number] => [170 + x / 3, 165 + y / 3];
const z5 = (x: number, y: number): [number, number] => [570 + x / 3, 165 + y / 3];
const teal: [number, number][] = [
  ...([[345,73],[313,100],[480,72],[498,100],[545,97],[565,73],[693,73],[728,97],[788,73],[853,97],[918,73],[945,93],[978,100],[985,55],[1167,75],[1078,100],[313,185],[498,285],[543,282],[728,280],[760,277],[853,277],[945,277],[978,292],[1078,292],[1182,275],[310,545],[495,545],[540,545],[718,545],[760,547],[853,547],[945,550],[977,552],[1185,545],[310,635],[495,635],[540,635],[978,605],[1190,598],[313,717],[400,720],[495,717],[628,720],[760,720],[853,725],[945,720],[977,742],[1078,742],[1185,738],[1025,873],[1147,885]] as [number,number][]).map(([x, y]) => z4(x, y)),
  ...([[235,55],[425,55],[228,107],[328,100],[430,100],[488,72],[462,93],[620,72],[648,93],[680,97],[715,72],[845,72],[865,97],[910,100],[933,72],[1063,72],[1093,100],[228,298],[328,290],[430,290],[462,277],[555,275],[647,277],[680,282],[770,280],[865,282],[910,285],[1093,285],[220,545],[328,550],[430,550],[462,550],[555,550],[647,550],[688,545],[780,548],[872,545],[913,545],[1006,548],[1097,545],[220,635],[430,638],[462,638],[647,638],[688,638],[872,638],[913,638],[1097,638],[220,715],[220,735],[328,740],[430,720],[430,742],[462,720],[555,725],[647,722],[688,722],[780,720],[913,718],[1006,720],[1097,718],[261,887],[382,875],[228,187],[462,187],[647,187],[688,187],[910,187],[1097,187]] as [number,number][]).map(([x, y]) => z5(x, y)),
];
const pads = [[285,168,42,25],[358,168,42,25],[433,168,43,25],[498,168,63,25],[275,200,61,61],[351,198,61,62],[424,198,61,62],[496,198,67,64],[418,267,73,73],[275,348,62,60],[351,347,61,61],[424,347,61,61],[493,340,74,73],[268,447,73,26],[419,448,71,25],[523,460,32,13],[648,168,65,25],[733,168,44,24],[808,168,44,24],[881,168,44,24],[646,198,67,64],[724,198,62,62],[799,198,62,62],[873,198,60,62],[643,340,73,73],[724,347,62,61],[814,426,32,32],[878,415,54,55],[1170,168,72,1],[1269,265,23,22],[1322,242,44,69],[1269,431,23,23],[1333,420,33,45]];
const olive = [[395,463,41,10],[479,466,34,7],[888,425,34,34],[1189,423,34,34],[1308,292,27,57],[1308,349,58,34]];
const darkOlive = [[657,325,46,15],[584,460,46,13],[988,397,10,45],[1021,398,12,43]];
const pinkV = [[316,200,261],[316,348,408],[392,198,260],[392,347,408],[465,198,260],[465,347,408],[542,198,262],[542,340,413],[668,198,262],[668,340,413],[745,198,260],[745,347,408],[820,198,260],[893,198,260],[830,426,458],[900,425,470],[1211,423,457],[1340,349,383],[1280,265,287],[1280,431,454],[1361,420,465],[316,168,193],[392,168,193],[465,168,193],[542,168,193]];
const pinkH = [[275,336,240],[351,412,240],[424,485,240],[496,563,240],[646,713,241],[724,786,241],[799,861,241],[873,933,241],[275,337,388],[351,412,388],[424,485,388],[493,567,388],[643,716,388],[724,786,388],[285,327,180],[358,400,180],[433,476,180],[498,561,180],[648,713,180],[418,491,316],[814,846,448],[878,932,451],[1189,1223,446],[1308,1366,353],[1308,1366,365],[1269,1292,280],[1269,1292,445],[1333,1366,450],[1258,1303,208]];
const darkV = [[308,168,473],[313,168,473],[347,168,473],[375,168,473],[382,168,473],[416,168,473],[496,168,473],[552,168,473],[601,168,473],[607,168,473],[713,168,473],[772,168,473],[854,168,473],[873,168,473],[932,168,473],[950,168,473],[951,168,473],[988,168,442],[989,168,442],[998,168,442],[1010,168,442],[1048,168,442],[1089,168,442],[1107,168,442],[1137,168,442],[1169,168,442],[1287,168,442],[1355,168,473]];
const darkH = [[304,905,282],[304,1366,297],[304,905,303],[304,905,314],[304,905,342],[304,905,348],[304,905,360],[304,905,396],[304,905,442],[905,1205,346],[905,1205,373],[905,1205,385],[905,1205,419],[905,1205,439],[905,988,230],[1205,1366,180],[1205,1366,205],[1205,1366,276],[1205,1366,287],[1205,1366,380],[1205,1366,410],[1205,1366,437]];
const redV = [[304,168,473],[454,168,473],[754,378,473],[830,378,473],[905,375,442],[1205,168,442],[1280,168,442]];
const redH = [[304,905,317],[304,905,405],[905,1205,442],[1205,1366,187],[1205,1366,337],[1205,1366,364],[1205,1366,442]];
const greenH = [[304,905,172,4],[304,905,229,4],[304,905,379,4],[303,453,317,4],[383,455,283,3],[308,345,347,3],[393,452,376,4],[532,680,407,3],[532,713,442,4]];
const greenV = [[304,168,380],[379,168,380],[454,168,378],[680,168,473],[755,168,378],[830,168,378],[905,168,378],[347,320,378]];
const purple = [[302,169,8,6],[376,169,8,6],[451,169,8,6],[526,169,8,6],[302,227,6,8],[376,227,8,6],[451,227,9,6],[374,375,9,7],[451,375,9,7],[546,372,13,13],[675,169,9,6],[750,169,10,6],[826,169,9,6],[899,169,8,6],[675,225,9,10],[750,226,10,7],[826,226,9,7],[901,226,6,9],[675,372,9,9],[750,374,10,7],[826,374,9,7],[898,374,9,7],[702,279,23,8],[823,434,14,16],[1197,338,18,18],[1096,360,7,28],[1096,381,26,7]];
const axes: [string, number][] = [["E",181],["D",228],["C",318],["B",378],["A",405]];
const poly = (cx: number, cy: number, r = 13) =>
  Array.from({ length: 12 }, (_, i) => {
    const an = (Math.PI * 2 * i) / 12 + Math.PI / 12;
    return `${(cx + r * Math.cos(an)).toFixed(1)},${(cy + r * Math.sin(an)).toFixed(1)}`;
  }).join(" ");
const vDims: [string, number, number, string][] = [
  ["2400", 263, 200, "#d8d8d8"],["3920", 263, 272, "#d8d8d8"],["2680", 263, 346, "#d8d8d8"],["1200", 263, 391, "#d8d8d8"],["3400", 263, 443, "#d8d8d8"],
  ["13600", 229, 326, "#d8d8d8"],["203360", 287, 273, "#8a8ab8"],["501550", 287, 322, "#8a8ab8"],["8000", 287, 382, "#8a8ab8"],["800", 287, 458, "#8a8ab8"],
];

const CadDrawing = () => (
  <Canvas viewBox="170 168 1196 305">
    {[173,228,282,303,315,318,320,342,348,360,378,396,405,442].map((y) => (
      <line key={y} x1="202" x2="304" y1={y} y2={y} stroke="#007800" />
    ))}
    <line x1="236" x2="236" y1="168" y2="473" stroke="#007800" />
    <line x1="270" x2="270" y1="168" y2="473" stroke="#007800" />
    {pads.map(([x, y, w, h], i) => <rect key={i} x={x} y={y} width={w} height={h} fill="#aabf60" />)}
    {olive.map(([x, y, w, h], i) => <rect key={i} x={x} y={y} width={w} height={h} fill="#7b7800" />)}
    <polygon points="1270,168 1290,168 1303,198 1303,213 1258,213 1258,198" fill="#7b7800" />
    <polygon points="297,450 312,435 352,473 330,473" fill="#505050" shapeRendering="auto" />
    <rect x="485" y="466" width="22" height="7" fill="#505050" />
    <rect x="714" y="281" width="41" height="22" fill="#007800" />
    <rect x="988" y="218" width="217" height="25" fill="#007800" />
    <rect x="988" y="226" width="217" height="9" fill="#ffff00" />
    <line x1="988" x2="1205" y1="230" y2="230" stroke="#5a8000" />
    <rect x="1071" y="347" width="73" height="95" fill="#007800" />
    <rect x="1200" y="410" width="11" height="13" fill="#007800" />
    <g shapeRendering="auto">{teal.map(([x, y], i) => <circle key={i} cx={x} cy={y} r="5.500" fill="#3c7878" />)}</g>
    {pinkV.map(([x, a1, b1], i) => <line key={i} x1={x} x2={x} y1={a1} y2={b1} stroke="#b4609c" strokeWidth="2" />)}
    {pinkH.map(([a1, b1, y], i) => <line key={i} x1={a1} x2={b1} y1={y} y2={y} stroke="#b4609c" strokeWidth="2" />)}
    {darkOlive.map(([x, y, w, h], i) => <rect key={i} x={x} y={y} width={w} height={h} fill="#403c00" />)}
    {/* hatched blocks */}
    <rect x="987.500" y="347.500" width="104" height="94" fill="none" stroke="#fff" />
    <rect x="990.500" y="349.500" width="78" height="90" fill="none" stroke="#c8c8c8" />
    <g stroke="#d0d0d0" shapeRendering="auto">
      {[0,1,2,3,4,5].map((n) => <line key={n} x1={1025 + n * 12} y1={394 + 40 - n * 6} x2={1035 + n * 6} y2={352} />)}
      {[0,1,2,3].map((n) => <line key={n} x1={1033 + n * 10} y1={440} x2={1070} y2={404 + n * 10} />)}
      <line x1="990" y1="360" x2="998" y2="352" /><line x1="990" y1="385" x2="998" y2="377" />
    </g>
    <rect x="998" y="349" width="23" height="93" fill="#505050" />
    <rect x="988" y="397" width="10" height="45" fill="#403c00" />
    <rect x="1021" y="398" width="12" height="43" fill="#403c00" />
    <circle cx="1029" cy="380" r="18" fill="#f0f0f0" stroke="#fff" shapeRendering="auto" />
    <path d="M1021 364a18 18 0 0 0 0 32z" fill="#505050" shapeRendering="auto" />
    <rect x="303.500" y="175.500" width="76" height="53" fill="none" stroke="#fff" />
    <rect x="315.500" y="177.500" width="11" height="11" fill="none" stroke="#fff" strokeWidth="2" />
    <g stroke="#ddd" shapeRendering="auto">
      <line x1="310" y1="198" x2="328" y2="178" /><line x1="322" y1="200" x2="345" y2="176" /><line x1="336" y1="220" x2="372" y2="178" />
    </g>
    {/* beams */}
    {greenV.map(([x, a1, b1], i) => <line key={i} x1={x} x2={x} y1={a1} y2={b1} stroke="#00ff00" strokeWidth="4" />)}
    {greenV.map(([x, a1, b1], i) => <line key={i} x1={x} x2={x} y1={a1} y2={b1} stroke="#007800" />)}
    {greenH.map(([a1, b1, y, w], i) => <line key={i} x1={a1} x2={b1} y1={y} y2={y} stroke="#00ff00" strokeWidth={w} />)}
    {[172,229].map((y) => <line key={y} x1="304" x2="905" y1={y} y2={y} stroke="#ff0000" strokeOpacity="0.800" />)}
    {[229,172,381].map((y) => <rect key={y} x="485" y={y - 2} width="22" height="4" fill="#505050" />)}
    <rect x="702" y="376" width="23" height="4" fill="#505050" />
    <rect x="713" y="170" width="1" height="4" fill="#505050" />
    <rect x="527" y="168" width="5" height="64" fill="#0070e0" />
    <rect x="527" y="378" width="5" height="95" fill="#0070e0" />
    <rect x="527" y="232" width="5" height="146" fill="#ffff00" />
    {[[520,177,13],[520,198,13],[520,213,12],[520,235,13],[520,297,12],[520,358,13],[520,382,11],[520,423,13],[520,468,5]].map(([x, y, h], i) => (
      <rect key={i} x={x + 0.5} y={y + 0.5} width="4" height={h} fill="none" stroke="#888" />
    ))}
    {/* construction lines */}
    {darkV.map(([x, a1, b1], i) => <line key={i} x1={x} x2={x} y1={a1} y2={b1} stroke="#7b0000" />)}
    {darkH.map(([a1, b1, y], i) => <line key={i} x1={a1} x2={b1} y1={y} y2={y} stroke="#7b0000" />)}
    {redV.map(([x, a1, b1], i) => <line key={i} x1={x} x2={x} y1={a1} y2={b1} stroke="#ff0000" />)}
    {redH.map(([a1, b1, y], i) => <line key={i} x1={a1} x2={b1} y1={y} y2={y} stroke="#ff0000" />)}
    <rect x="170" y="297" width="134" height="1" fill="#7b0000" />
    {/* purple */}
    {purple.map(([x, y, w, h], i) => <rect key={i} x={x} y={y} width={w} height={h} fill="#8000ff" />)}
    <rect x="302" y="372" width="5" height="9" fill="#0070e0" />
    <rect x="376" y="357" width="7" height="7" fill="#0070e0" />
    <path d="M445 348v-10h19v10" fill="none" stroke="#8000ff" strokeWidth="2.500" />
    <path d="M889 429v-18h32v18" fill="none" stroke="#8000ff" strokeWidth="3" />
    <circle cx="773" cy="442" r="8" fill="none" stroke="#8000ff" strokeWidth="3" shapeRendering="auto" />
    <rect x="1160" y="410" width="19" height="19" fill="none" stroke="#8000ff" strokeWidth="5" />
    <rect x="1281" y="439" width="74" height="7" fill="#0000a0" />
    <rect x="812.500" y="466.500" width="36" height="7" fill="none" stroke="#7b7800" />
    {/* axis bubbles */}
    <g shapeRendering="auto" fill="none" stroke="#007800">
      {axes.map(([, y]) => <polygon key={y} points={poly(189, y)} />)}
      {[303, 379, 454, 529, 680, 755, 830, 905].map((x) => <polygon key={x} points={poly(x, 181)} />)}
      <polygon points={poly(905, 460)} />
      <polygon points={poly(987, 460)} />
      <polygon points={poly(1090, 460)} />
      <line x1="1010" y1="465" x2="1078" y2="465" />
      <line x1="998" y1="442" x2="998" y2="473" />
      <line x1="1010" y1="442" x2="1010" y2="473" />
      <line x1="1048" y1="442" x2="1048" y2="473" />
    </g>
    <g shapeRendering="auto" fontFamily='"Liberation Sans", sans-serif'>
      {axes.map(([l, y]) => <text key={l} x="189" y={y + 5.5} fontSize="15" fill="#dcdcdc" textAnchor="middle">{l}</text>)}
      {vDims.map(([l, x, y, c]) => (
        <text key={l} transform={`translate(${x} ${y}) rotate(-90)`} fontSize="16" fill={c} textAnchor="middle">{l}</text>
      ))}
      <text x="590" y="234" fontSize="15" fill="#e4d4e4" textLength="33">6600</text>
      <text x="978" y="470" fontSize="15" fill="#c8c8c8">1500</text>
      <text x="1015" y="470" fontSize="15" fill="#d8d8d8">1700</text>
      <text x="1047" y="470" fontSize="15" fill="#d8d8d8">93</text>
      <text x="1090" y="465" fontSize="13" fill="#d8d8d8" textAnchor="middle">3</text>
      <text x="238" y="386" fontSize="11" fill="#00e800">Y</text>
      <text x="262" y="412" fontSize="11" fill="#e01010">X</text>
    </g>
    {/* UCS */}
    <rect x="224" y="380" width="3" height="44" fill="#00ff00" />
    <polygon points="225.500,374 221,386 230,386" fill="#00ff00" />
    <rect x="225" y="422" width="42" height="3" fill="#ff0000" />
    <polygon points="274,423.500 262,419 262,428" fill="#ff0000" />
  </Canvas>
);

/* ---------- table ---------- */
const widths = [31, 41, 82, 81, 80, 81, 81, 81, 101, 72, 71, 41, 80, 82, 81, 81, 56];
const rows: string[][] = [
  ["1","","","","","2#16","G4#12","G4#12","(φ6)","φ8@100/20","2","200/200","6/6","0","20*d","ma"],
  ["2","","","","","2#14","","G4#12","(φ6)","φ8@100/20","2","200","6","","","ma"],
  ["3","","","","","2#14","","","(φ6)","φ8@100/20","2","","","","","ma"],
];
const renderCell = (v: string) =>
  v.split(/([#φ])/).map((x, i) =>
    x === "#" ? <RebarIII key={i}>Φ</RebarIII> : x === "φ" ? <Rebar key={i}>Φ</Rebar> : <React.Fragment key={i}>{x}</React.Fragment>
  );

const SteelTable = () => (
  <Table>
    <colgroup>
      {widths.map((w, i) => <col key={i} width={w} />)}
    </colgroup>
    <thead>
      <tr>
        <Th rowSpan={2} />
        <Th rowSpan={2}>跨号</Th>
        <Th colSpan={3}>上部钢筋</Th>
        <Th colSpan={2}>下部钢筋</Th>
        <Th colSpan={3}>侧面钢筋</Th>
        <Th rowSpan={2}>箍筋</Th>
        <Th rowSpan={2}>肢数</Th>
        <Th rowSpan={2}>次梁宽度</Th>
        <Th rowSpan={2} $hot>次梁加筋</Th>
        <Th rowSpan={2}>吊筋</Th>
        <Th rowSpan={2}>吊筋锚固</Th>
        <Th rowSpan={2}>箍筋加密</Th>
      </tr>
      <tr>
        {["左支座钢筋","跨中钢筋","右支座钢筋","下通长筋","下部钢筋","侧面通长筋","侧面原位标注筋","拉筋"].map((h) => <Th key={h}>{h}</Th>)}
      </tr>
    </thead>
    <tbody>
      {rows.map((r, ri) => (
        <tr key={ri}>
          <RowHead $sel={ri === 1}>{ri + 1}</RowHead>
          {r.map((v, ci) => (
            <Td key={ci} $sel={ri === 1} $active={ri === 1 && ci === 12} $thick={ci === 1}>
              {renderCell(v)}
              {ri === 1 && ci === 12 && <Handle />}
            </Td>
          ))}
        </tr>
      ))}
    </tbody>
  </Table>
);

/* ---------- tree ---------- */
type Node = { l: string; c?: string; i?: string; open?: boolean; sel?: boolean; last?: boolean; cad?: boolean };
const tree: Node[] = [
  { l: "常用构件类型", open: true },
  { i: "grid", l: "轴网", c: "(J)" },
  { i: "raft", l: "筏板基础", c: "(M)" },
  { i: "col", l: "框柱", c: "(Z)" },
  { i: "wall", l: "剪力墙", c: "(Q)" },
  { i: "beam", l: "梁", c: "(L)", sel: true },
  { i: "slab", l: "现浇板", c: "(B)", last: true },
  { l: "轴线" },
  { l: "柱", open: true },
  { i: "col", l: "框柱", c: "(Z)" },
  { i: "col", l: "暗柱", c: "(Z)" },
  { i: "col", l: "端柱", c: "(Z)" },
  { i: "gz", l: "构造柱", c: "(Z)", last: true },
  { l: "墙" }, { l: "门窗洞" }, { l: "梁" }, { l: "板" }, { l: "基础" }, { l: "其它" }, { l: "自定义" },
  { l: "识别", cad: true },
];

const Tree = () => (
  <>
    {tree.map((n, i) =>
      n.i ? (
        <TreeRow key={i} $child $last={n.last}>
          {n.sel ? (
            <SelBox><Icon n={n.i} /><span>{n.l}<Latin>{n.c}</Latin></span></SelBox>
          ) : (
            <>
              <Space $w={3} />
              <Icon n={n.i} />
              <TreeLabel><span>{n.l}<Latin>{n.c}</Latin></span></TreeLabel>
            </>
          )}
        </TreeRow>
      ) : (
        <TreeRow key={i}>
          <Chevron viewBox="0 0 12 12">
            <path d={n.open ? "M2 4l4 4 4-4" : "M4 2l4 4-4 4"} fill="none" stroke={n.open ? "#444" : "#aaa"} strokeWidth="1.500" />
          </Chevron>
          <DotLink />
          <Icon n={n.open ? "folderOpen" : "folder"} />
          <TreeLabel>
            <span>{n.cad && <Latin>CAD</Latin>}{n.l}</span>
            {n.cad && (
              <>
                <Space $w={6} />
                <Icon n="cad" />
                <NewTag>NEW</NewTag>
              </>
            )}
          </TreeLabel>
        </TreeRow>
      )
    )}
  </>
);

/* ---------- misc svg ---------- */
const LogoMark = () => (
  <>
    <rect x="0" y="0" width="15" height="15" rx="3" fill="#0a8fe8" />
    <path d="M7.500 2v11M4 6.500h7M4 6.500v3h3M11 6.500V4H8" stroke="#fff" strokeWidth="1.800" fill="none" />
  </>
);

export default function App() {
  return (
    <Page>
      <Global />
      <TitleBar>
        <AppLogo viewBox="0 0 15 15"><LogoMark /></AppLogo>
        <span>广联达BIM钢筋算量软件 GGJ2013 - [C:\Users\Administrator.PC-20141127NRHM\Desktop\白龙村-2018-02-02-19-24-35(2666版).GGJ12]</span>
        <WinBtns>
          <WinBtn viewBox="0 0 46 22"><line x1="18" x2="28" y1="11.500" y2="11.500" stroke="#222" /></WinBtn>
          <WinBtn viewBox="0 0 46 22"><path d="M18.500 8.500h8v7h-8zM20.500 8.500v-2h8v7h-2" fill="none" stroke="#222" /></WinBtn>
          <WinBtn viewBox="0 0 46 22"><path d="M18 6l10 10M28 6L18 16" stroke="#222" /></WinBtn>
        </WinBtns>
      </TitleBar>

      <MenuBar>
        {[["文件(F)",48],["编辑(E)",50],["楼层(L)",47],["构件(N)",51],["绘图(D)",53],["修改(M)",53],["钢筋量(Q)",64],["视图(V)",50],["工具(T)",49],["云应用(Y)",62],["BIM应用(I)",69],["在线服务(S)",74],["帮助(H)",50],["版本号(B)",61]].map(([l, w]) => (
          <MenuItem key={l as string} $w={w as number}>{l}</MenuItem>
        ))}
        <MenuTool $w={76}><Icon n="chg" /><span>新建变更</span></MenuTool>
        <ArrowBox $w={11} />
        <MenuTool $w={62}><Icon n="xiao" /><span>广小二</span></MenuTool>
        <Notice>为什么无法导入图纸</Notice>
        <Avatar />
        <UserText $ml={54}>8339</UserText>
        <ArrowBox $w={18} />
        <UserText $ml={3}>造价豆:0</UserText>
        <UserText $ml={8}><Icon n="bell" /></UserText>
        <More>»</More>
      </MenuBar>

      <ToolRow $h={30}>
        <Toolbar $w={152} $h={27}><Items list={R1A} /><More>»</More></Toolbar>
        <Toolbar $w={546} $h={27}><Items list={R1B} /><More>»</More></Toolbar>
        <Toolbar $w={662} $h={27}><Items list={R1C} /><More>»</More></Toolbar>
      </ToolRow>

      <Body>
        <Nav>
          <NavHead>
            模块导航栏
            <NavHeadIcons viewBox="0 0 34 15">
              <path d="M5 3h6v1l-1 1v3l1 1v1H5V9l1-1V5L5 4zM8 10v3" stroke="#fff" fill="none" />
              <path d="M21 4l7 7M28 4l-7 7" stroke="#fff" />
            </NavHeadIcons>
          </NavHead>
          <NavBtn>工程设置</NavBtn>
          <NavBtn $down>绘图输入</NavBtn>
          <TreeWrap>
            <TreeTools>
              <PlusMinus viewBox="0 0 18 14">
                <path d="M4 1v7M.5 4.500h7M12 6v7M8.500 9.500h7" stroke="#1c6a3a" strokeWidth="2.400" />
              </PlusMinus>
              <PlusMinus viewBox="0 0 18 14">
                <path d="M0 4.500h8M8 10.500h8" stroke="#1c6a3a" strokeWidth="2.400" />
              </PlusMinus>
            </TreeTools>
            <Tree />
          </TreeWrap>
          <NavBtn>单构件输入</NavBtn>
          <NavBtn>报表预览</NavBtn>
        </Nav>

        <Main>
          <ToolRow $h={28}>
            <Toolbar $w={791}><Items list={R2} /></Toolbar>
          </ToolRow>
          <ToolRow $h={28}>
            <Toolbar $w={638}>
              <Space $w={8} />
              <Combo $w={59}><ComboText>基础层</ComboText></Combo>
              <Combo $w={69} $ml={2}><ComboText>常用构件类型</ComboText></Combo>
              <Combo $w={69} $ml={3}><ComboText>梁</ComboText></Combo>
              <Combo $w={69} $ml={3}><ComboText>KL-1(2)</ComboText></Combo>
              <Combo $w={70} $ml={3}><ComboText>分层1</ComboText></Combo>
              <Items list={R3A} />
            </Toolbar>
            <Toolbar $w={422}><Items list={R3B} /></Toolbar>
          </ToolRow>
          <ToolRow $h={28}>
            <Toolbar $w={1158}>
              <Items list={R4A} />
              <Combo $w={56} $ml={1}><ComboText /></Combo>
              <Items list={R4B} />
              <More>»</More>
            </Toolbar>
            <Toolbar $w={34}><Grip $w={11} /></Toolbar>
          </ToolRow>

          <CadDrawing />

          <ToolRow $h={34}>
            <Toolbar $w={210} $mt={2}><Items list={S1} /></Toolbar>
            <Toolbar $w={262} $mt={2} $ml={-1}><Items list={S2} /></Toolbar>
            <Toolbar $w={414} $mt={2} $ml={-1}>
              <Space $w={9} />
              <Combo $w={46} $plain><ComboText>不偏移</ComboText></Combo>
              <ArrowBox $w={12} />
              <Sep $w={7} />
              <SnapText $off>X=</SnapText>
              <Spin $w={56} $ml={5}>0<SpinArrows><TriUp /><TriDown /></SpinArrows></Spin>
              <SnapText $ml={3}>mm</SnapText>
              <SnapText $ml={6}>Y=</SnapText>
              <Spin $w={56} $ml={5}>0<SpinArrows><TriUp /><TriDown /></SpinArrows></Spin>
              <SnapText $ml={3}>mm</SnapText>
              <Check />
              <SnapText $ml={8}>旋转</SnapText>
              <Spin $w={67} $ml={6}>0.000<SpinArrows><TriUp /><TriDown /></SpinArrows></Spin>
              <SnapText $ml={2}>°</SnapText>
            </Toolbar>
          </ToolRow>

          <BottomPanel>
            <PanelGrip>
              <CloseMark viewBox="0 0 9 10">
                <rect x=".5" y=".5" width="8" height="9" fill="#eee" stroke="#666" />
                <path d="M1 1l7 8M8 1L1 9" stroke="#a04040" />
              </CloseMark>
            </PanelGrip>
            <PanelMain>
              <TableTools>
                <ToolBtn $w={88}><Icon n="dcopy" /><span>复制跨数据</span></ToolBtn>
                <ToolBtn $w={88} $off><Icon n="paste" /><span>粘贴跨数据</span></ToolBtn>
                <ToolBtn $w={94}><span>输入当前列数据</span></ToolBtn>
                <ToolBtn $w={94}><span>删除当前列数据</span></ToolBtn>
                <ToolBtn $w={58}><span>页面设置</span></ToolBtn>
                <ToolBtn $w={70}><span>调换起始跨</span></ToolBtn>
                <ToolBtn $w={84}><span>悬挑钢筋代号</span></ToolBtn>
              </TableTools>
              <TableArea><SteelTable /></TableArea>
              <HBar>
                <HArrow viewBox="0 0 17 15"><path d="M11 4L7 7.500l4 3.500" fill="none" stroke="#555" strokeWidth="2" /></HArrow>
                <HTrackGap $w={430} />
                <HThumb />
                <HTrackGap $w={174} />
                <HArrow viewBox="0 0 17 15"><path d="M6 4l4 3.500L6 11" fill="none" stroke="#555" strokeWidth="2" /></HArrow>
              </HBar>
            </PanelMain>
          </BottomPanel>
        </Main>
      </Body>

      <StatusBar>
        <StatusCell $w={148}><Latin>X=33661 Y=13870</Latin></StatusCell>
        <StatusCell $w={77}><span>层高:<Latin>2.15m</Latin></span></StatusCell>
        <StatusCell $w={98}><span>底标高:<Latin>-2.2m</Latin></span></StatusCell>
        <StatusCell $w={48}><Latin>1(2)</Latin></StatusCell>
        <StatusCell $w={915}><span>按鼠标左键选择梁图元,按右键或<Latin>ESC</Latin>退出;可以通过回车键及<Latin>shift+</Latin>"→←↑"光标键在跨之间、上下输入框之间进行切换</span></StatusCell>
        <StatusCell $w={70}><Latin>37.8 FPS</Latin></StatusCell>
      </StatusBar>

      <Taskbar>
        <StartBtn>
          <TaskSvg $s={16} viewBox="0 0 16 16"><path d="M0 2.500L6.500 1.500v6H0zM7.500 1.300L16 0v7.500H7.500zM0 8.500h6.500v6L0 13.500zM7.500 8.500H16V16l-8.500-1.300z" fill="#fff" /></TaskSvg>
        </StartBtn>
        <SearchBox>
          <TaskSvg $s={20} viewBox="0 0 20 20"><circle cx="10" cy="10" r="8" fill="none" stroke="#e4e4e4" strokeWidth="2.500" /></TaskSvg>
          <Space $w={7} />
          在这里输入你要搜索的内容
          <Space $w={111} />
          <TaskSvg $s={16} viewBox="0 0 16 16"><path d="M5.500 1h5v9h-5zM3 8c0 7 10 7 10 0M8 13v2M5 15.500h6" fill="none" stroke="#888" /></TaskSvg>
        </SearchBox>
        <TaskCell $w={50}><TaskSvg viewBox="0 0 24 24"><path d="M7.500 4.500h9v15h-9zM5 7H3v10h2M19 7h2v10h-2" fill="none" stroke="#eee" strokeWidth="1.200" /></TaskSvg></TaskCell>
        <TaskCell $w={48}><TaskSvg viewBox="0 0 24 24"><path d="M12 12C8 10 4 8 5 4c3-3 8-1 7 8zM12 12c2-4 4-8 8-7 3 3 1 8-8 7zM12 12c4 2 8 4 7 8-3 3-8 1-7-8zM12 12c-2 4-4 8-8 7-3-3-1-8 8-7z" fill="#dcdcdc" /></TaskSvg></TaskCell>
        <TaskCell $w={53}><TaskSvg viewBox="0 0 24 24"><path d="M5 13h13c0-9-12-9-13-1 0 7 8 9 12 5M4 18C3 22 10 20 18 10c3-5 3-9-5-6" fill="none" stroke="#f0f0f0" strokeWidth="2" /></TaskSvg></TaskCell>
        <TaskCell $w={54}><TaskSvg viewBox="0 0 24 24"><path d="M19 8c-4-6-14-4-14 4 0 8 12 10 14 2-1-5-8-6-9-2 0 3 4 3 5 2" fill="none" stroke="#bbb" strokeWidth="1.500" /></TaskSvg></TaskCell>
        <TaskCell $w={49}><TaskSvg viewBox="0 0 24 24"><path d="M3 12C4 4 12 2 17 5c4 3 4 6 4 9H9c1 4 7 4 11 2v4c-6 3-15 1-15-6 0-3 2-5 4-6-3 0-5 2-6 4zm6 0h7c0-4-7-4-7 0z" fill="#1277d8" /></TaskSvg></TaskCell>
        <TaskCell $w={49}><TaskSvg viewBox="0 0 24 24"><circle cx="12" cy="13" r="8" fill="#fff" /><path d="M7 13h10c0-6-10-6-10 0 0 5 7 6 10 3" fill="none" stroke="#1a8adc" strokeWidth="2.500" /><path d="M3 20C2 12 14 2 22 3c1 3-2 6-4 8" fill="none" stroke="#f2b41e" strokeWidth="1.600" /></TaskSvg></TaskCell>
        <TaskCell $w={49}><TaskSvg viewBox="0 0 24 24"><path d="M2 5h8l2 2h10v13H2z" fill="#f4cf5c" /><path d="M2 9h20v11H2z" fill="#fae08c" /><path d="M8 20v-6l4-3 4 3v6h-3v-3h-2v3z" fill="#38a8e8" /></TaskSvg></TaskCell>
        <TaskCell $w={49} $bar><TaskSvg viewBox="0 0 24 24"><path d="M16 2C6 3 2 10 4 16c2 6 10 7 14 3 3-4 2-7-2-8-3 0-4 2-4 3l3 1c-2 2-5 1-5-3 0-5 6-6 8-6l2-3z" fill="#2d9ce8" /></TaskSvg></TaskCell>
        <TaskCell $w={49} $bar><TaskSvg viewBox="0 0 24 24"><circle cx="12" cy="12" r="10" fill="#8ecb3e" /><circle cx="12" cy="12" r="6.500" fill="#fff" /><path d="M7 12h10M8 9h8M8 15h8" stroke="#4c9a1c" strokeWidth="1.400" /></TaskSvg></TaskCell>
        <TaskCell $w={48} $bar $active><TaskSvg viewBox="0 0 24 24"><rect x="1" y="1" width="22" height="22" rx="4" fill="#0a8fe8" /><path d="M12 4v16M6 11h12M6 11v5h6M18 11V7h-5" stroke="#fff" strokeWidth="2.400" fill="none" /></TaskSvg></TaskCell>
        <TrayItem $ml={60} $w={23}>链接</TrayItem>
        <TrayItem $ml={19} $w={48}><CpuBox><span>27%</span><span>CPU使用</span></CpuBox></TrayItem>
        <TrayItem $ml={19} $w={12}><TaskSvg $s={12} viewBox="0 0 12 12"><path d="M1 9l5-5 5 5" fill="none" stroke="#eee" /></TaskSvg></TrayItem>
        <TrayItem $ml={12} $w={14}><TaskSvg $s={16} viewBox="0 0 16 16"><rect x="3" y="6" width="11" height="7" fill="#ddd" /><path d="M3 2v4M7 2v4" stroke="#fff" /></TaskSvg></TrayItem>
        <TrayItem $ml={11} $w={14}><TaskSvg $s={16} viewBox="0 0 16 16"><path d="M1 14C2 7 7 2 14 1M4 14c1-4 4-7 8-8M7 14c1-2 2-3 4-4" fill="none" stroke="#ddd" strokeDasharray="2 1" /><circle cx="3" cy="14" r="1.200" fill="#fff" /></TaskSvg></TrayItem>
        <TrayItem $ml={7} $w={14}><TaskSvg $s={16} viewBox="0 0 16 16"><path d="M1 6h3l4-3v11l-4-3H1z" fill="none" stroke="#eee" /><path d="M10 5c2 2 2 5 0 7M12 3c3 3 3 8 0 11" fill="none" stroke="#bbb" /></TaskSvg></TrayItem>
        <TrayItem $ml={11} $w={22}><TaskSvg $s={22} viewBox="0 0 22 22"><rect x=".5" y="3.500" width="21" height="15" fill="none" stroke="#eee" /><path d="M3 7h16M3 10h16M3 13h16M6 16h10" stroke="#eee" strokeDasharray="2 1" /></TaskSvg></TrayItem>
        <TrayItem $ml={9} $w={14}><TrayChar>中</TrayChar></TrayItem>
        <TrayItem $ml={16} $w={14}><TrayS>S</TrayS></TrayItem>
        <TrayItem $ml={12} $w={70}><CpuBox><span>9:53</span><span>2018/2/10</span></CpuBox></TrayItem>
        <TrayItem $ml={14} $w={20}>
          <TaskSvg $s={18} viewBox="0 0 18 18"><path d="M1 1h16v13H1z" fill="#eee" /><path d="M4 5h10M4 8h10M4 11h10" stroke="#333" /></TaskSvg>
          <NotifyBadge>21</NotifyBadge>
        </TrayItem>
      </Taskbar>

      {/* overlays */}
      <Badge>67</Badge>
      <SogouBar>
        <SogouCell><SogouWord>英</SogouWord></SogouCell>
        <SogouCell><SogouWord>’,</SogouWord></SogouCell>
        <SogouCell><TaskSvg $s={16} viewBox="0 0 16 16"><circle cx="8" cy="8" r="7" fill="none" stroke="#1f6fd0" strokeWidth="1.600" /><circle cx="5.500" cy="6" r="1" fill="#1f6fd0" /><circle cx="10.500" cy="6" r="1" fill="#1f6fd0" /><path d="M4.500 10c2 2 5 2 7 0" stroke="#1f6fd0" fill="none" /></TaskSvg></SogouCell>
        <SogouCell><TaskSvg $s={16} viewBox="0 0 16 16"><rect x="5.500" y="1" width="5" height="9" rx="2.500" fill="#1f6fd0" /><path d="M3 7c0 7 10 7 10 0M8 12v3" stroke="#1f6fd0" fill="none" /></TaskSvg></SogouCell>
        <SogouCell><TaskSvg $s={16} viewBox="0 0 16 16"><rect x="0" y="2" width="16" height="12" rx="2" fill="#1f6fd0" /><path d="M2 5h12M2 8h12M4 11h8" stroke="#fff" strokeDasharray="2 1" /></TaskSvg></SogouCell>
        <SogouCell><TaskSvg $s={16} viewBox="0 0 16 16"><circle cx="7" cy="4" r="3" fill="#b8c8d8" /><path d="M2 15c0-7 10-7 10 0z" fill="#b8c8d8" /></TaskSvg></SogouCell>
        <SogouCell><TaskSvg $s={16} viewBox="0 0 16 16"><path d="M5 1L1 4l2 3 1-1v9h8V6l1 1 2-3-4-3c-1 2-5 2-6 0z" fill="#1f6fd0" /></TaskSvg></SogouCell>
        <SogouCell><TaskSvg $s={16} viewBox="0 0 16 16"><path d="M14 4l-3 3-2-2 3-3c-3-1-6 1-5 4L1 12l3 3 6-6c3 1 5-2 4-5z" fill="#1f6fd0" /></TaskSvg></SogouCell>
      </SogouBar>
      <SogouLogo>S</SogouLogo>
      <RedEllipse viewBox="0 0 365 167"><ellipse cx="182.500" cy="83.500" rx="180" ry="81" fill="none" stroke="#f00000" strokeWidth="3" /></RedEllipse>
    </Page>
  );
}
